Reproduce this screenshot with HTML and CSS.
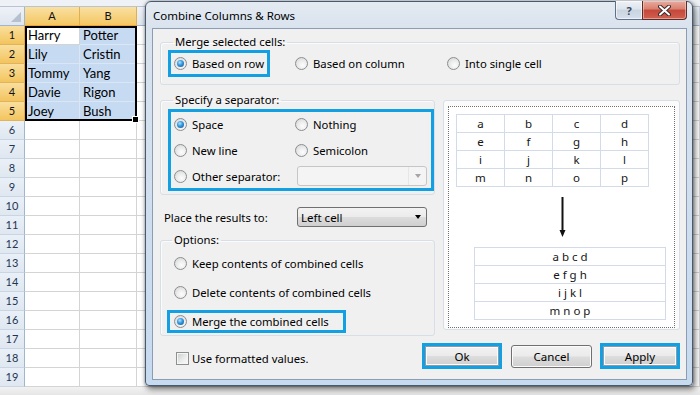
FILE: index.html
```html
<!DOCTYPE html>
<html>
<head>
<meta charset="utf-8">
<link rel="stylesheet" href="styles.css">
</head>
<body>
<div class="screen">
  <div class="sheet">
    <div class="strip"></div>
    <div class="row head"><div class="rh corner"><span class="tri"></span></div><div class="ch a sel">A</div><div class="ch b sel">B</div><div class="ch c"></div></div>
    <div class="row"><div class="rh sel">1</div><div class="cell a">Harry</div><div class="cell b in">Potter</div><div class="cell c"></div></div>
    <div class="row"><div class="rh sel">2</div><div class="cell a in">Lily</div><div class="cell b in">Cristin</div><div class="cell c"></div></div>
    <div class="row"><div class="rh sel">3</div><div class="cell a in">Tommy</div><div class="cell b in">Yang</div><div class="cell c"></div></div>
    <div class="row"><div class="rh sel">4</div><div class="cell a in">Davie</div><div class="cell b in">Rigon</div><div class="cell c"></div></div>
    <div class="row"><div class="rh sel">5</div><div class="cell a in">Joey</div><div class="cell b in">Bush</div><div class="cell c"></div></div>
    <div class="row"><div class="rh">6</div><div class="cell a"></div><div class="cell b"></div><div class="cell c"></div></div>
    <div class="row"><div class="rh">7</div><div class="cell a"></div><div class="cell b"></div><div class="cell c"></div></div>
    <div class="row"><div class="rh">8</div><div class="cell a"></div><div class="cell b"></div><div class="cell c"></div></div>
    <div class="row"><div class="rh">9</div><div class="cell a"></div><div class="cell b"></div><div class="cell c"></div></div>
    <div class="row"><div class="rh">10</div><div class="cell a"></div><div class="cell b"></div><div class="cell c"></div></div>
    <div class="row"><div class="rh">11</div><div class="cell a"></div><div class="cell b"></div><div class="cell c"></div></div>
    <div class="row"><div class="rh">12</div><div class="cell a"></div><div class="cell b"></div><div class="cell c"></div></div>
    <div class="row"><div class="rh">13</div><div class="cell a"></div><div class="cell b"></div><div class="cell c"></div></div>
    <div class="row"><div class="rh">14</div><div class="cell a"></div><div class="cell b"></div><div class="cell c"></div></div>
    <div class="row"><div class="rh">15</div><div class="cell a"></div><div class="cell b"></div><div class="cell c"></div></div>
    <div class="row"><div class="rh">16</div><div class="cell a"></div><div class="cell b"></div><div class="cell c"></div></div>
    <div class="row"><div class="rh">17</div><div class="cell a"></div><div class="cell b"></div><div class="cell c"></div></div>
    <div class="row"><div class="rh">18</div><div class="cell a"></div><div class="cell b"></div><div class="cell c"></div></div>
    <div class="row"><div class="rh">19</div><div class="cell a"></div><div class="cell b"></div><div class="cell c"></div></div>
    <div class="bottom"></div>
  </div>
  <div class="selbox"><span class="handle"></span></div>

  <div class="dialog">
    <div class="titlebar">
      <span class="title">Combine Columns &amp; Rows</span>
      <div class="caps">
        <span class="cap help">?</span>
        <span class="cap close"><svg width="13" height="11" viewBox="0 0 13 11"><path d="M2 1.5 L11 9.5 M11 1.5 L2 9.5" stroke="#3b2a2a" stroke-width="4" stroke-linecap="round"/><path d="M2 1.5 L11 9.5 M11 1.5 L2 9.5" stroke="#ffffff" stroke-width="2" stroke-linecap="round"/></svg></span>
      </div>
    </div>
    <div class="client">
      <fieldset class="group merge">
        <legend>Merge selected cells:</legend>
        <div class="merge-opts">
          <div class="opt hl"><span class="radio on"></span>Based on row</div>
          <div class="opt"><span class="radio"></span>Based on column</div>
          <div class="opt"><span class="radio"></span>Into single cell</div>
        </div>
      </fieldset>
      <div class="body">
        <div class="leftcol">
          <fieldset class="group sep">
            <legend>Specify a separator:</legend>
            <div class="sepbox">
              <div class="opt"><span class="radio on"></span>Space</div>
              <div class="opt"><span class="radio"></span>Nothing</div>
              <div class="opt"><span class="radio"></span>New line</div>
              <div class="opt"><span class="radio"></span>Semicolon</div>
              <div class="opt"><span class="radio"></span>Other separator:</div>
              <div class="combo disabled"><span class="cval"></span><span class="cbtn"><span class="caret"></span></span></div>
            </div>
          </fieldset>
          <div class="place">
            <span class="plabel">Place the results to:</span>
            <div class="combo"><span class="cval">Left cell</span><span class="cbtn"><span class="caret"></span></span></div>
          </div>
          <fieldset class="group options">
            <legend>Options:</legend>
            <div class="orow"><span class="radio"></span>Keep contents of combined cells</div>
            <div class="orow"><span class="radio"></span>Delete contents of combined cells</div>
            <div class="orow hl2"><span class="radio on"></span>Merge the combined cells</div>
          </fieldset>
        </div>
        <div class="preview">
          <div class="dash">
            <div class="grid">
              <span>a</span><span>b</span><span>c</span><span>d</span>
              <span>e</span><span>f</span><span>g</span><span>h</span>
              <span>i</span><span>j</span><span>k</span><span>l</span>
              <span>m</span><span>n</span><span>o</span><span>p</span>
            </div>
            <svg class="arrow" width="7" height="40" viewBox="0 0 7 40"><path d="M3.5 0 V34" stroke="#111" stroke-width="2"/><path d="M0.5 33 L6.5 33 L3.5 40 Z" fill="#111"/></svg>
            <div class="result">
              <span>a b c d</span>
              <span>e f g h</span>
              <span>i j k l</span>
              <span>m n o p</span>
            </div>
          </div>
        </div>
      </div>
      <div class="footer">
        <div class="chk"><span class="check"></span>Use formatted values.</div>
        <div class="buttons">
          <div class="bhl"><div class="btn">Ok</div></div>
          <div class="btn cancel">Cancel</div>
          <div class="bhl"><div class="btn">Apply</div></div>
        </div>
      </div>
    </div>
  </div>
</div>
</body>
</html>
```

FILE: styles.css
```css
html, body {
  margin: 0;
  padding: 0;
}
body {
  width: 700px;
  height: 395px;
  overflow: hidden;
  background: #ffffff;
}
.screen {
  position: relative;
  width: 700px;
  height: 395px;
  overflow: hidden;
}

/* ---------- spreadsheet ---------- */
.sheet {
  font-family: "Lato", "Liberation Sans", sans-serif;
  color: #000;
}
.strip {
  height: 6px;
  background: #eef1f5;
  border-bottom: 1px solid #b9c4d2;
}
.row {
  display: flex;
  height: 19px;
}
.bottom {
  height: 10px;
  background: linear-gradient(#f2f2f2, #e2e2e2);
}
.rh {
  width: 25px;
  flex: none;
  box-sizing: border-box;
  background: linear-gradient(#eaf0f7, #dfe7f0);
  border-right: 1px solid #9eb6ce;
  border-bottom: 1px solid #c9d5e2;
  color: #1f3554;
  font-size: 11px;
  line-height: 18px;
  text-align: center;
}
.rh.sel {
  background: linear-gradient(#f9df9e, #f3c45e);
  border-right: 1px solid #e9a63a;
  border-bottom: 1px solid #e2b45a;
  color: #111;
}
.corner {
  display: flex;
  align-items: flex-end;
  justify-content: flex-end;
  padding: 0 3px 3px 0;
  background: linear-gradient(#eef2f7, #dfe6ef);
  border-bottom: 1px solid #9eb6ce;
}
.tri {
  width: 0;
  height: 0;
  border-left: 10px solid transparent;
  border-bottom: 10px solid #b5c1ce;
}
.ch {
  box-sizing: border-box;
  font-size: 11px;
  line-height: 18px;
  text-align: center;
  border-right: 1px solid #c9d5e2;
  border-bottom: 1px solid #9eb6ce;
  background: linear-gradient(#eef2f7, #dfe6ef);
  color: #1f3554;
}
.ch.sel {
  background: linear-gradient(#f9e0a2, #f4c762);
  border-right: 1px solid #e0b050;
  border-bottom: 1px solid #e9a63a;
  color: #111;
}
.a { width: 55px; flex: none; }
.b { width: 57px; flex: none; }
.c { flex: 1; }
.cell {
  box-sizing: border-box;
  border-right: 1px solid #d4d4d4;
  border-bottom: 1px solid #d4d4d4;
  font-size: 13px;
  line-height: 18px;
  padding-left: 3px;
  white-space: nowrap;
}
.cell.in {
  background: #c6daf2;
  border-color: #dbe6f4;
}
.selbox {
  position: absolute;
  left: 25px;
  top: 26px;
  width: 112px;
  height: 95px;
  box-sizing: border-box;
  border: 2px solid #000;
}
.handle {
  position: absolute;
  right: -4px;
  bottom: -4px;
  width: 5px;
  height: 5px;
  background: #000;
  border: 1px solid #fff;
}

/* ---------- dialog ---------- */
.dialog {
  position: absolute;
  left: 145px;
  top: 1px;
  width: 548px;
  height: 385px;
  box-sizing: border-box;
  border: 1px solid #4a5a6e;
  border-radius: 6px 6px 4px 4px;
  background: linear-gradient(#e4eaf1 0px, #d9e3ee 26px, #c6daf0 100%);
  padding: 0 5px 5px 6px;
  box-shadow: 2px 3px 6px rgba(0, 0, 0, 0.55), 0 0 3px rgba(0, 0, 0, 0.35);
  display: flex;
  flex-direction: column;
  font-family: "Noto Sans", "Liberation Sans", sans-serif;
  font-size: 11.3px;
  color: #000;
}
.titlebar {
  height: 26px;
  flex: none;
  display: flex;
  align-items: flex-start;
}
.title {
  margin-top: 7px;
  padding-left: 1px;
  line-height: 14px;
  font-size: 11.5px;
}
.caps {
  margin-left: auto;
  margin-top: -1px;
  display: flex;
}
.cap {
  height: 19px;
  box-sizing: border-box;
  display: flex;
  align-items: center;
  justify-content: center;
}
.help {
  width: 27px;
  border: 1px solid #5f7189;
  border-right: none;
  border-top: none;
  border-radius: 0 0 0 4px;
  background: linear-gradient(#eef2f7 0%, #dde4ed 45%, #c9d4e1 50%, #d6dfea 100%);
  color: #39485c;
  font-weight: bold;
  font-size: 11px;
  box-shadow: inset 0 0 0 1px rgba(255, 255, 255, 0.6);
}
.close {
  width: 45px;
  border: 1px solid #5a2c2c;
  border-top: none;
  border-radius: 0 0 4px 0;
  background: linear-gradient(#e9aa9d 0%, #d98070 45%, #c5473a 50%, #cf604f 100%);
  box-shadow: inset 0 0 0 1px rgba(255, 220, 210, 0.5);
}
.client {
  flex: 1;
  box-sizing: border-box;
  background: #f0f0f0;
  border: 1px solid #8c9db3;
  padding: 6px 6px 0 7px;
  display: flex;
  flex-direction: column;
}
.group {
  margin: 0;
  padding: 0;
  min-width: 0;
  border: 1px solid #d5dfe5;
  border-radius: 3px;
  box-shadow: inset 1px 1px 0 #fbfbfb;
}
.group legend {
  margin-left: 5px;
  padding: 0 2px;
  line-height: 14px;
}
.merge {
  padding: 1px 0 7px 7px;
}
.merge-opts {
  display: grid;
  grid-template-columns: 102px 127px 1fr;
  column-gap: 25px;
  align-items: center;
}
.opt {
  display: flex;
  align-items: center;
  gap: 5px;
  white-space: nowrap;
}
.merge .opt {
  height: 27px;
  box-sizing: border-box;
}
.hl {
  border: 3px solid #13a0e3;
  padding-left: 3px;
}
.body {
  display: flex;
  gap: 8px;
}
.leftcol {
  width: 275px;
  flex: none;
  display: flex;
  flex-direction: column;
}
.sep {
  margin-top: 8px;
  padding: 2px 0 3px 7px;
}
.sepbox {
  border: 3px solid #13a0e3;
  padding-left: 3px;
  display: grid;
  grid-template-columns: 121px 1fr;
  grid-template-rows: 25px 27px 24px;
  align-items: center;
}
.radio {
  width: 13px;
  height: 13px;
  flex: none;
  box-sizing: border-box;
  border-radius: 50%;
  border: 1px solid #8b8e91;
  background: radial-gradient(circle at 60% 65%, #fdfdfd 0%, #ececec 45%, #cfd1d3 100%);
  display: grid;
  place-items: center;
}
.radio.on::after {
  content: "";
  width: 7px;
  height: 7px;
  border-radius: 50%;
  background: radial-gradient(circle at 40% 35%, #b3e4ff 0%, #3a9ee2 40%, #0c4c8e 100%);
}
.combo {
  box-sizing: border-box;
  height: 20px;
  width: 130px;
  margin-left: 2px;
  border: 1px solid #707070;
  border-radius: 3px;
  background: linear-gradient(#f3f3f3 0%, #ebebeb 50%, #dddddd 50%, #cfcfcf 100%);
  display: flex;
  align-items: center;
}
.cval {
  flex: 1;
  padding-left: 3px;
  font-size: 11.5px;
}
.cbtn {
  width: 17px;
  align-self: stretch;
  display: flex;
  align-items: center;
  justify-content: center;
}
.caret {
  width: 0;
  height: 0;
  border-left: 3.5px solid transparent;
  border-right: 3.5px solid transparent;
  border-top: 4px solid #000;
}
.combo.disabled {
  border-color: #c6c6c6;
  background: #f4f4f4;
}
.combo.disabled .cbtn {
  border-left: 1px solid #e6e6e6;
}
.combo.disabled .caret {
  border-top-color: #a5a5a5;
}
.place {
  display: flex;
  align-items: center;
  height: 20px;
  margin-top: 12px;
  padding-left: 4px;
}
.plabel {
  width: 131px;
  flex: none;
}
.options {
  margin-top: 6px;
  padding: 2px 0 2px 6px;
}
.orow {
  height: 29px;
  box-sizing: border-box;
  display: flex;
  align-items: center;
  gap: 5px;
  padding-left: 7px;
  white-space: nowrap;
}
.orow.hl2 {
  height: 23px;
  width: 179px;
  margin-top: 3px;
  border: 3px solid #13a0e3;
  padding-left: 4px;
}
.preview {
  width: 237px;
  height: 230px;
  margin-top: 15px;
  box-sizing: border-box;
  border: 1px solid #d5dfe5;
  border-radius: 3px;
  background: #fbfbfb;
  padding: 5px 4px 1px 4px;
}
.dash {
  height: 100%;
  box-sizing: border-box;
  border: 1px dotted #707070;
  background: #ffffff;
  padding: 7px 0 0 7px;
  display: flex;
  flex-direction: column;
  align-items: flex-start;
}
.grid {
  display: grid;
  grid-template-columns: repeat(4, 47px);
  grid-auto-rows: 17px;
  gap: 1px;
  background: #d3dbe9;
  border: 1px solid #d3dbe9;
}
.grid span, .result span {
  background: #ffffff;
  text-align: center;
  line-height: 17px;
  font-size: 11.5px;
  color: #151515;
}
.arrow {
  display: block;
  margin: 10px 0 0 103px;
}
.result {
  display: grid;
  grid-template-columns: 190px;
  grid-auto-rows: 17px;
  gap: 1px;
  background: #d3dbe9;
  border: 1px solid #d3dbe9;
  margin: 10px 0 0 18px;
}
.footer {
  display: flex;
  align-items: center;
  height: 26px;
  margin-top: 7px;
}
.chk {
  display: flex;
  align-items: center;
  gap: 3px;
  padding-left: 16px;
  margin-top: 5px;
}
.check {
  width: 13px;
  height: 13px;
  box-sizing: border-box;
  border: 1px solid #8e8f8f;
  background: linear-gradient(135deg, #c9cbcd 0%, #eeeeee 60%, #fafafa 100%);
  box-shadow: inset 0 0 0 1px #f6f6f6;
}
.buttons {
  margin-left: auto;
  display: flex;
  align-items: center;
}
.btn {
  box-sizing: border-box;
  border: 1px solid #707070;
  border-radius: 3px;
  background: linear-gradient(#f2f2f2 0%, #ebebeb 48%, #dddddd 52%, #cfcfcf 100%);
  box-shadow: inset 0 0 0 1px #fbfbfb;
  display: flex;
  align-items: center;
  justify-content: center;
  font-size: 11.5px;
}
.bhl {
  width: 80px;
  height: 26px;
  box-sizing: border-box;
  border: 3px solid #13a0e3;
  display: flex;
}
.bhl .btn {
  flex: 1;
  border-color: #8c9aa8;
  border-radius: 0;
}
.btn.cancel {
  width: 81px;
  height: 23px;
  margin: 0 8px 0 9px;
}
```
